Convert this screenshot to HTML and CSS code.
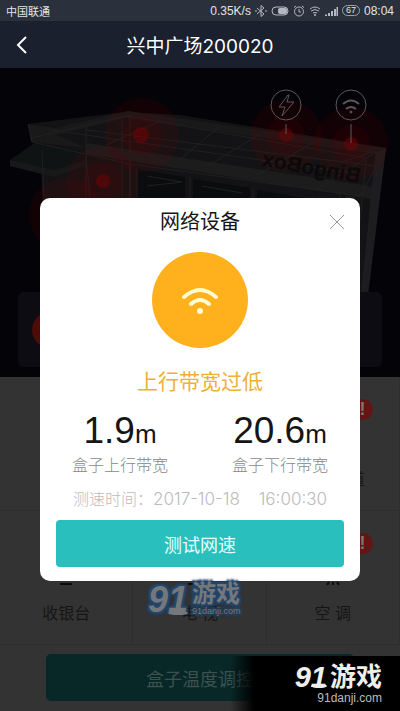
FILE: index.html
```html
<!DOCTYPE html>
<html lang="zh-CN">
<head>
  <meta charset="UTF-8">
  <meta name="viewport" content="width=device-width, initial-scale=1.0">
  <title>兴中广场200020</title>
  <link rel="stylesheet" href="styles.css">
</head>
<body>
  <!-- status bar -->
  <div class="status-bar">
    <span class="carrier">中国联通</span>
    <div class="status-icons">
      <span>0.35K/s</span>
      <svg class="status-icon" width="12" height="12" viewBox="0 0 12 12"><path d="M2 3l7 6-3 2.500V.5L9 3 2 9M0 6h2M10 6h2"/></svg>
      <svg class="status-icon" width="18" height="12" viewBox="0 0 18 12"><rect x="1" y="2" width="16" height="8" rx="4"/><rect class="fill" x="7" y="3" width="9" height="6" rx="2"/></svg>
      <svg class="status-icon" width="12" height="12" viewBox="0 0 12 12"><circle cx="6" cy="6.500" r="4.500"/><path d="M6 4v3h2M1 2.500L3 1M11 2.500L9 1"/></svg>
      <svg class="status-icon" width="12" height="12" viewBox="0 0 12 12"><path d="M1 4q5-4 10 0M2 6q4-3 8 0M4 8q2-1 4 0"/><circle class="fill" cx="6" cy="10" r="1"/></svg>
      <svg class="status-icon" width="13" height="12" viewBox="0 0 13 12"><path class="bars" d="M1 11V9.500M4 11V8M7 11V6M10 11V4M12.500 11V2"/></svg>
      <span class="battery">67</span>
      <span>08:04</span>
    </div>
  </div>

  <header class="header">
    <button class="back" aria-label="返回">
      <svg width="12" height="18" viewBox="0 0 12 18"><path d="M10 1L2 9l8 8"/></svg>
    </button>
    <h1>兴中广场200020</h1>
  </header>

  <main class="main">
    <!-- box model -->
    <section class="hero">
      <svg class="model" viewBox="0 0 400 309" preserveAspectRatio="xMidYMin slice">
        <path fill="#131315" d="M28 56L124 44 180 47 386 80 366 232 300 242 45 190 40 74z"/>
        <path fill="#19191a" d="M28 56L55 60 128 43 386 80 376 86 126 50 57 67 86 80 31 74z"/>
        <path fill="#101313" d="M10 92L36 74 89 86 86 98 54 109 10 98z"/>
        <path fill="#171919" d="M10 92l44 10 32-10v6l-32 11-44-11z"/>
        <path fill="#1c1c1d" d="M86 75l290 44-4 12L86 86z"/>
        <path fill="#0b0c0e" d="M137 101l48 8v60h-48zM193 111l57 9v60h-57zM257 122l60 10v60h-60z"/>
        <path fill="#1d1d1f" d="M376 84l10-4-18 148-8 6zM346 128l8 1-12 104-7 1z"/>
        <path class="lines" d="M28 56l4 18L130 96 360 128 386 80M31 70l95-22 240 42M86 56v90M122 50v90M130 46v90M160 53l-54 24M220 58l-42 35M258 67l-50 31M312 75l-55 32M376 84l-60 38M50 62l310 44M86 62l290 36M42 82l4 105M86 88l9 95M130 96v90M137 101v70M190 109v64M253 120v64M320 128v64M147 108l35 6M147 118l35-4M202 118l40 7M266 130l40 7M342 94l30-10M340 120l-3 120M366 92l-14 142M376 86l-14 142"/>
        <g class="pulse">
          <circle cx="142" cy="67" r="37"/><circle cx="142" cy="67" r="20"/><circle class="core" cx="141" cy="67" r="8"/>
          <circle cx="102" cy="114" r="36"/><circle cx="102" cy="114" r="20"/><circle class="core" cx="103" cy="113" r="7"/>
          <circle cx="286" cy="68" r="36"/><circle cx="286" cy="68" r="19"/><circle class="core" cx="286" cy="67" r="7"/>
          <circle cx="351" cy="76" r="37"/><circle cx="351" cy="76" r="19"/><circle class="core" cx="351" cy="76" r="7"/>
          <circle cx="66" cy="147" r="37"/>
        </g>
        <text class="model-name" transform="translate(359 115) scale(-1 1) rotate(-10)">BingoBox</text>
        <g class="pins">
          <circle cx="286" cy="37" r="15"/><path d="M286 56v10M288 27l-9 12h6l-3 9 12-14h-7l2-7z"/>
          <circle cx="351" cy="37" r="15"/><path d="M351 56v19"/>
          <path class="bold" d="M343 36q8-7 16 0M346 41q5-4 10 0"/><circle class="dot" cx="351" cy="44" r="1"/>
        </g>
      </svg>
      <div class="alarm-card"><span class="alarm-dot"></span></div>
    </section>

    <section class="devices">
      <div class="device"></div>
      <div class="device"></div>
      <div class="device"><span class="alert">!</span><span>网络通道</span></div>
      <div class="device"><svg width="32" height="24" viewBox="0 0 32 24"><path d="M10 22h12"/></svg><span>收银台</span></div>
      <div class="device"><svg width="32" height="24" viewBox="0 0 32 24"><path d="M5 22h22"/></svg><span>电 视</span></div>
      <div class="device"><span class="alert">!</span><svg width="32" height="24" viewBox="0 0 32 24"><path d="M12 20l-2 3M16 20v3M20 20l2 3"/></svg><span>空 调</span></div>
    </section>

    <div class="actions">
      <button class="temp-btn">盒子温度调控</button>
    </div>

    <div class="overlay">
      <div class="dialog" role="dialog" aria-labelledby="dialog-title">
        <h2 id="dialog-title">网络设备</h2>
        <button class="close" aria-label="关闭">
          <svg width="16" height="16" viewBox="0 0 16 16"><path d="M1 1l14 14M15 1L1 15"/></svg>
        </button>
        <div class="wifi-circle">
          <svg width="40" height="32" viewBox="0 0 40 32"><path d="M4 13Q20-1 36 13M11 20q9-8 18 0"/><circle cx="20" cy="27" r="3"/></svg>
        </div>
        <p class="warning">上行带宽过低</p>
        <div class="speeds">
          <div class="speed">
            <p class="value">1.9<small>m</small></p>
            <p class="label">盒子上行带宽</p>
          </div>
          <div class="speed">
            <p class="value">20.6<small>m</small></p>
            <p class="label">盒子下行带宽</p>
          </div>
        </div>
        <p class="time"><span>测速时间：<time>2017-10-18</time></span><time>16:00:30</time></p>
        <button class="test-btn">测试网速</button>
      </div>
    </div>

    <div class="mark mark-center">
      <b class="mark-num">91</b>
      <div class="mark-text"><b>游戏</b><span>91danji.com</span></div>
    </div>
    <div class="mark mark-corner">
      <div class="mark-row"><b class="mark-num">91</b><b>游戏</b></div>
      <span>91danji.com</span>
    </div>
  </main>
</body>
</html>
```

FILE: styles.css
```css
* {
  box-sizing: border-box;
}

body {
  margin: 0;
  min-height: 100vh;
  display: flex;
  flex-direction: column;
  background: #333;
  color: #151515;
  font-family: "Liberation Sans", "Noto Sans CJK SC", sans-serif;
}

h1, h2, p {
  margin: 0;
  font-weight: 400;
}

button {
  border: none;
  padding: 0;
  background: none;
  font-family: inherit;
  cursor: pointer;
}

svg {
  display: block;
  fill: none;
}

/* Status bar */
.status-bar {
  display: flex;
  justify-content: space-between;
  align-items: center;
  height: 21px;
  padding: 0 6px;
  background: #2b303d;
  color: #e2e4e8;
  font-size: 12px;
}

.carrier {
  font-size: 11px;
}

.status-icons {
  display: flex;
  align-items: center;
  gap: 4px;
}

.status-icon {
  stroke: #b4b8c2;
  stroke-width: 1;
}

.status-icon .fill {
  fill: #b4b8c2;
  stroke: none;
}

.status-icon .bars {
  stroke-width: 2;
}

.battery {
  padding: 0 3px;
  border: 1px solid #9da1ab;
  border-radius: 6px;
  font-size: 9px;
  line-height: 9px;
}

/* Header */
.header {
  position: relative;
  display: flex;
  align-items: center;
  justify-content: center;
  height: 47px;
  background: #1a202e;
  color: #fff;
}

.header h1 {
  font-family: Inter, "Noto Sans CJK SC", sans-serif;
  font-size: 19px;
}

.back {
  position: absolute;
  left: 16px;
}

.back svg {
  stroke: #fff;
  stroke-width: 2;
}

.main {
  position: relative;
  flex: 1;
  display: flex;
  flex-direction: column;
}

/* Box model */
.hero {
  display: flex;
  flex-direction: column;
  justify-content: flex-end;
  position: relative;
  height: 309px;
  padding: 0 18px 10px;
  background: #040308;
  overflow: hidden;
}

.model {
  position: absolute;
  top: 0;
  left: 0;
  width: 100%;
  height: 100%;
}

.lines {
  stroke: #202021;
}

.pulse circle {
  fill: #700;
  fill-opacity: 0.13;
}

.pulse .core {
  fill: #800;
  fill-opacity: 0.4;
}

.model-name {
  fill: #0c090a;
  font-size: 21px;
  font-weight: 700;
}

.pins {
  stroke: #5c5657;
}

.pins .bold {
  stroke-width: 2;
}

.pins .dot {
  fill: #5c5657;
}

.alarm-card {
  position: relative;
  display: flex;
  align-items: center;
  height: 75px;
  padding: 0 14px;
  border-radius: 6px;
  background: #0c0c12;
}

.alarm-dot {
  width: 36px;
  height: 36px;
  border-radius: 50%;
  background: #4d0c07;
}

/* Devices */
.devices {
  display: grid;
  grid-template-columns: repeat(3, 1fr);
  grid-auto-rows: 134px;
}

.device {
  position: relative;
  display: flex;
  flex-direction: column;
  align-items: center;
  justify-content: flex-end;
  gap: 16px;
  padding-bottom: 18px;
  border-right: 1px solid #2e2e2e;
  border-bottom: 1px solid #2e2e2e;
  font-size: 16px;
  line-height: 24px;
}

.device svg {
  stroke: #0c0c0c;
  stroke-width: 2;
}

.alert {
  position: absolute;
  top: 22px;
  right: 26px;
  width: 21px;
  height: 21px;
  border-radius: 50%;
  background: #641414;
  color: #777;
  font-size: 18px;
  font-weight: 700;
  line-height: 21px;
  text-align: center;
}

.actions {
  padding: 9px 46px;
}

.temp-btn {
  width: 100%;
  height: 47px;
  border-radius: 5px;
  background: #082827;
  color: #3d5150;
  font-size: 18px;
}

/* Dialog */
.overlay {
  position: absolute;
  inset: 0;
  display: flex;
  align-items: center;
  justify-content: center;
  padding: 0 40px;
}

.dialog {
  position: relative;
  width: 100%;
  max-width: 480px;
  padding: 10px 16px 14px;
  border-radius: 10px;
  background: #fff;
  text-align: center;
}

.dialog h2 {
  font-size: 20px;
  line-height: 28px;
}

.close {
  position: absolute;
  top: 16px;
  right: 15px;
}

.close svg {
  stroke: #999;
}

.wifi-circle {
  display: flex;
  align-items: center;
  justify-content: center;
  width: 96px;
  height: 96px;
  margin: 16px auto 20px;
  border-radius: 50%;
  background: #ffb01d;
}

.wifi-circle svg {
  stroke: #fffbd0;
  stroke-width: 4;
  stroke-linecap: round;
}

.wifi-circle circle {
  fill: #fffbd0;
  stroke: none;
}

.warning {
  color: #efb03a;
  font-size: 21px;
  line-height: 28px;
}

.speeds {
  display: flex;
  justify-content: space-between;
  padding: 15px 16px 0;
}

.value {
  font-size: 37px;
  line-height: 40px;
}

.value small {
  font-size: 26px;
}

.label {
  color: #888;
  font-size: 16px;
  font-weight: 300;
  line-height: 24px;
}

.time {
  display: flex;
  justify-content: space-between;
  padding: 9px 17px 9px;
  color: #bbb;
  font-family: Inter, "Noto Sans CJK SC", sans-serif;
  font-size: 16px;
  font-weight: 300;
  line-height: 24px;
}

.time time {
  font-size: 17px;
}

.test-btn {
  width: 100%;
  height: 47px;
  border-radius: 4px;
  background: #28bfbc;
  color: #e8ffff;
  font-size: 18px;
}

/* Site marks */
.mark {
  position: absolute;
  display: flex;
}

.mark-num {
  position: relative;
  font-size: 36px;
  font-style: italic;
  line-height: 36px;
}

/* swoosh under the number */
.mark-num::after {
  content: "";
  position: absolute;
  right: 0;
  bottom: 3px;
  width: 50%;
  height: 4px;
  border-radius: 50%;
  background: currentColor;
}

.mark-text {
  display: flex;
  flex-direction: column;
}

.mark-text b {
  font-size: 24px;
  line-height: 24px;
}

.mark-center {
  top: 514px;
  left: 37%;
  gap: 4px;
  color: #75777b;
  text-shadow: 0 0 3px #24486f, 2px 2px 2px #24486f, -2px -2px 2px #24486f, 2px -2px 2px #24486f, -2px 2px 2px #24486f;
}

.mark-center span {
  font-size: 9px;
  line-height: 10px;
}

.mark-corner {
  right: 0;
  bottom: 0;
  width: 170px;
  height: 55px;
  padding-right: 18px;
  flex-direction: column;
  align-items: flex-end;
  justify-content: center;
  background: linear-gradient(to right, transparent, #000 24px);
  color: #eee;
}

.mark-row {
  display: flex;
  align-items: center;
  gap: 3px;
  font-size: 26px;
  line-height: 28px;
}

.mark-corner .mark-num {
  font-size: 29px;
  line-height: 28px;
}

.mark-corner span {
  color: #bbb;
  font-size: 12px;
  line-height: 14px;
}
```
